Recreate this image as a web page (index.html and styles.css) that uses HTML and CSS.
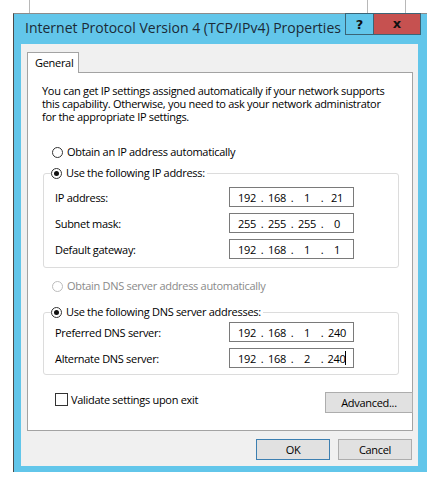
FILE: index.html
```html
<!DOCTYPE html>
<html>
<head>
<meta charset="utf-8">
<link rel="stylesheet" href="styles.css">
</head>
<body>
<div class="backdrop">
  <span class="tick tick-a"></span>
  <span class="tick tick-b"></span>
  <span class="tick tick-c"></span>
</div>
<div class="window">
  <div class="titlebar">
    <div class="title">Internet Protocol Version 4 (TCP/IPv4) Properties</div>
    <div class="caption-btns">
      <div class="cbtn help">?</div>
      <div class="cbtn close">x</div>
    </div>
  </div>
  <div class="client">
    <div class="tabs"><div class="tab">General</div></div>
    <div class="panel">
      <p class="desc">You can get IP settings assigned automatically if your network supports<br>this capability. Otherwise, you need to ask your network administrator<br>for the appropriate IP settings.</p>

      <div class="opt opt-auto-ip"><span class="radio"></span><span>Obtain an IP address automatically</span></div>

      <fieldset class="group group-ip">
        <legend><span class="radio checked"></span><span>Use the following IP address:</span></legend>
        <div class="field"><span class="lbl">IP address:</span>
          <div class="ipbox"><span class="oct">192</span><span class="dot">.</span><span class="oct">168</span><span class="dot">.</span><span class="oct">1</span><span class="dot">.</span><span class="oct">21</span></div></div>
        <div class="field"><span class="lbl">Subnet mask:</span>
          <div class="ipbox"><span class="oct">255</span><span class="dot">.</span><span class="oct">255</span><span class="dot">.</span><span class="oct">255</span><span class="dot">.</span><span class="oct">0</span></div></div>
        <div class="field"><span class="lbl">Default gateway:</span>
          <div class="ipbox"><span class="oct">192</span><span class="dot">.</span><span class="oct">168</span><span class="dot">.</span><span class="oct">1</span><span class="dot">.</span><span class="oct">1</span></div></div>
      </fieldset>

      <div class="opt opt-auto-dns disabled"><span class="radio"></span><span>Obtain DNS server address automatically</span></div>

      <fieldset class="group group-dns">
        <legend><span class="radio checked"></span><span>Use the following DNS server addresses:</span></legend>
        <div class="field"><span class="lbl">Preferred DNS server:</span>
          <div class="ipbox"><span class="oct">192</span><span class="dot">.</span><span class="oct">168</span><span class="dot">.</span><span class="oct">1</span><span class="dot">.</span><span class="oct">240</span></div></div>
        <div class="field"><span class="lbl">Alternate DNS server:</span>
          <div class="ipbox"><span class="oct">192</span><span class="dot">.</span><span class="oct">168</span><span class="dot">.</span><span class="oct">2</span><span class="dot">.</span><span class="oct">240<span class="caret"></span></span></div></div>
      </fieldset>

      <div class="bottom-row">
        <div class="check"><span class="box"></span><span>Validate settings upon exit</span></div>
        <div class="btn btn-adv">Advanced...</div>
      </div>
    </div>
    <div class="footer">
      <div class="btn btn-ok">OK</div>
      <div class="btn">Cancel</div>
    </div>
  </div>
</div>
</body>
</html>
```

FILE: styles.css
```css
* { box-sizing: border-box; }

html, body {
  margin: 0;
  padding: 0;
  background: #ffffff;
  font-family: "Open Sans", "Noto Sans", sans-serif;
  font-size: 11px;
  letter-spacing: -0.3px;
  color: #000;
}

.backdrop {
  height: 13px;
  display: flex;
  padding-left: 29px;
}
.tick {
  width: 1px;
  height: 13px;
  background: #b8b8b8;
}
.tick-b { margin-left: 337px; }
.tick-c { margin-left: 37px; }

.window {
  margin-left: 13px;
  width: 414px;
  height: 459px;
  background: #62c6ea;
  border-left: 1px solid #4a4a4a;
  border-top: 1px solid #8c8c8c;
  padding: 0 9px 6px 7px;
  display: flex;
  flex-direction: column;
}

.titlebar {
  height: 30px;
  display: flex;
  align-items: flex-start;
  justify-content: space-between;
}
.title {
  font-size: 14px;
  letter-spacing: 0;
  color: #1c2a36;
  padding-left: 4px;
  padding-top: 4px;
  line-height: 19px;
  white-space: nowrap;
}
.caption-btns {
  display: flex;
  margin-top: -1px;
  margin-right: -3px;
}
.cbtn {
  height: 22px;
  display: flex;
  align-items: center;
  justify-content: center;
  font-family: "DejaVu Sans", sans-serif;
  font-weight: bold;
  letter-spacing: 0;
  border: 1px solid #3b6476;
  color: #111;
}
.help {
  width: 29px;
  font-size: 13px;
  background: #62c6ea;
}
.close {
  width: 47px;
  border-left: none;
  background: #c65150;
  font-size: 13px;
  padding-bottom: 2px;
}

.client {
  flex: 1;
  background: #f0f0f0;
  padding: 8px 5px 0 6px;
  display: flex;
  flex-direction: column;
}

.tabs {
  display: flex;
  height: 20px;
}
.tab {
  width: 52px;
  height: 21px;
  background: #fff;
  border: 1px solid #a3a3a3;
  border-bottom: none;
  padding-left: 7px;
  line-height: 19px;
  position: relative;
  z-index: 1;
}

.panel {
  height: 359px;
  background: #fff;
  border: 1px solid #a3a3a3;
  padding: 11px 14px 0 14px;
  display: flex;
  flex-direction: column;
}

.desc {
  margin: 0;
  line-height: 13px;
  white-space: nowrap;
}

.opt {
  display: flex;
  align-items: center;
  height: 14px;
  margin-left: 10px;
  gap: 4px;
  line-height: 14px;
}
.opt-auto-ip { margin-top: 22px; }
.opt-auto-dns { margin-top: 11px; }
.disabled { color: #8a8a8a; }

.radio {
  width: 11px;
  height: 11px;
  border: 1px solid #333;
  border-radius: 50%;
  background: #fff;
  display: inline-flex;
  align-items: center;
  justify-content: center;
  flex-shrink: 0;
}
.radio.checked::after {
  content: "";
  width: 5px;
  height: 5px;
  border-radius: 50%;
  background: #111;
}
.disabled .radio { border-color: #bcbcbc; }

.group {
  margin: 0 0 0 1px;
  width: 356px;
  border: 1px solid #dcdcdc;
  border-radius: 3px;
  padding: 0 0 8px 11px;
  min-inline-size: 0;
}
.group legend {
  margin-left: -4px;
  padding: 0 2px 0 0;
  display: flex;
  align-items: center;
  gap: 4px;
  height: 14px;
  line-height: 14px;
}
.group-ip { margin-top: 7px; }
.group-ip .field:first-of-type { margin-top: 7px; }
.group-dns { margin-top: 12px; padding-bottom: 6px; }
.group-dns .field:first-of-type { margin-top: 3px; }

.field {
  display: flex;
  align-items: center;
  height: 20px;
  margin-top: 6px;
}
.lbl {
  width: 174px;
}
.ipbox {
  width: 125px;
  height: 20px;
  border: 1px solid #7a7a7a;
  display: flex;
  align-items: center;
  padding-left: 5px;
  background: #fff;
}
.oct {
  width: 24px;
  text-align: center;
  display: flex;
  justify-content: center;
  align-items: center;
}
.dot {
  width: 6px;
  text-align: center;
}
.caret {
  display: inline-block;
  width: 1px;
  height: 14px;
  background: #000;
}

.bottom-row {
  margin-top: 17px;
  display: flex;
  justify-content: space-between;
  align-items: flex-start;
  padding-left: 13px;
  width: 371px;
}
.check {
  display: flex;
  align-items: center;
  gap: 3px;
  height: 14px;
}
.box {
  width: 13px;
  height: 13px;
  border: 1px solid #333;
  background: #fff;
}

.btn {
  height: 21px;
  background: #e1e1e1;
  border: 1px solid #adadad;
  display: flex;
  align-items: center;
  justify-content: center;
  line-height: 14px;
}
.btn-adv { width: 88px; }

.footer {
  display: flex;
  justify-content: flex-end;
  gap: 8px;
  margin-top: 8px;
  padding-right: 1px;
}
.footer .btn { width: 74px; }
.btn-ok { border-color: #3c7fb1; }
```
